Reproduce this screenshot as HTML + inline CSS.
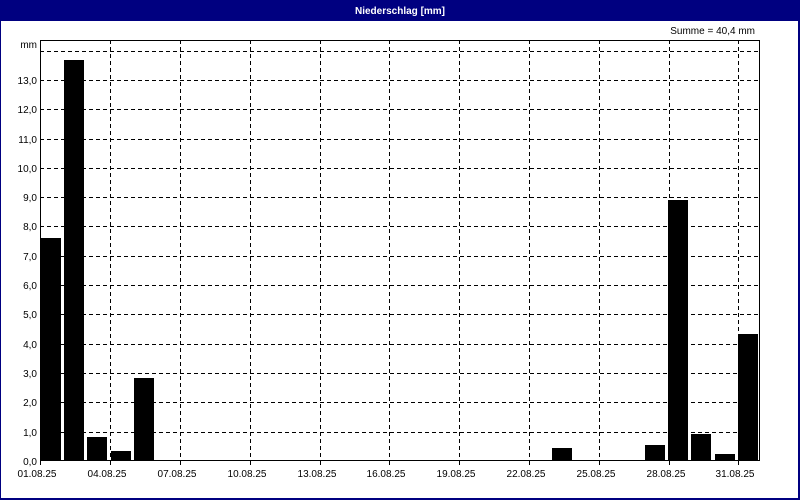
<!DOCTYPE html>
<html><head><meta charset="utf-8"><style>
html,body{margin:0;padding:0;background:#fff;}
svg{display:block;}
text{font-family:"Liberation Sans",sans-serif;font-size:10px;fill:#000;}
</style></head><body>
<svg width="800" height="500" viewBox="0 0 800 500" xmlns="http://www.w3.org/2000/svg">
<rect x="0" y="0" width="800" height="500" fill="#000080"/>
<rect x="1" y="21" width="797" height="477" fill="#fff"/>
<text x="400" y="14" text-anchor="middle" style="fill:#fff;font-weight:bold;font-size:10px">Niederschlag [mm]</text>
<text x="755" y="34" text-anchor="end">Summe = 40,4 mm</text>
<text x="37" y="48" text-anchor="end">mm</text>
<g stroke="#000" stroke-width="1" stroke-dasharray="4,3" shape-rendering="crispEdges">
<path d="M40 432.5H760M40 402.5H760M40 373.5H760M40 344.5H760M40 314.5H760M40 285.5H760M40 256.5H760M40 226.5H760M40 197.5H760M40 168.5H760M40 139.5H760M40 109.5H760M40 80.5H760M40 51.5H760"/>
<path d="M110.5 40V461M180.5 40V461M250.5 40V461M320.5 40V461M389.5 40V461M459.5 40V461M529.5 40V461M599.5 40V461M669.5 40V461M738.5 40V461"/>
</g>
<g fill="#000" shape-rendering="crispEdges">
<rect x="41" y="238" width="20" height="223"/>
<rect x="64" y="60" width="20" height="401"/>
<rect x="87" y="437" width="20" height="24"/>
<rect x="111" y="451" width="20" height="10"/>
<rect x="134" y="378" width="20" height="83"/>
<rect x="552" y="448" width="20" height="13"/>
<rect x="645" y="445" width="20" height="16"/>
<rect x="668" y="200" width="20" height="261"/>
<rect x="691" y="434" width="20" height="27"/>
<rect x="715" y="454" width="20" height="7"/>
<rect x="738" y="334" width="20" height="127"/>
</g>
<g stroke="#000" stroke-width="1" fill="none" shape-rendering="crispEdges">
<rect x="40.5" y="40.5" width="719" height="420"/>
<path d="M40.5 461V465M110.5 461V465M180.5 461V465M250.5 461V465M320.5 461V465M389.5 461V465M459.5 461V465M529.5 461V465M599.5 461V465M669.5 461V465M738.5 461V465"/>
</g>
<g text-anchor="end">
<text x="37" y="465">0,0</text>
<text x="37" y="436">1,0</text>
<text x="37" y="406">2,0</text>
<text x="37" y="377">3,0</text>
<text x="37" y="348">4,0</text>
<text x="37" y="318">5,0</text>
<text x="37" y="289">6,0</text>
<text x="37" y="260">7,0</text>
<text x="37" y="230">8,0</text>
<text x="37" y="201">9,0</text>
<text x="37" y="172">10,0</text>
<text x="37" y="143">11,0</text>
<text x="37" y="113">12,0</text>
<text x="37" y="84">13,0</text>
</g>
<g text-anchor="middle">
<text x="37" y="477">01.08.25</text>
<text x="107" y="477">04.08.25</text>
<text x="177" y="477">07.08.25</text>
<text x="247" y="477">10.08.25</text>
<text x="317" y="477">13.08.25</text>
<text x="386" y="477">16.08.25</text>
<text x="456" y="477">19.08.25</text>
<text x="526" y="477">22.08.25</text>
<text x="596" y="477">25.08.25</text>
<text x="666" y="477">28.08.25</text>
<text x="735" y="477">31.08.25</text>
</g>
</svg>
</body></html>
